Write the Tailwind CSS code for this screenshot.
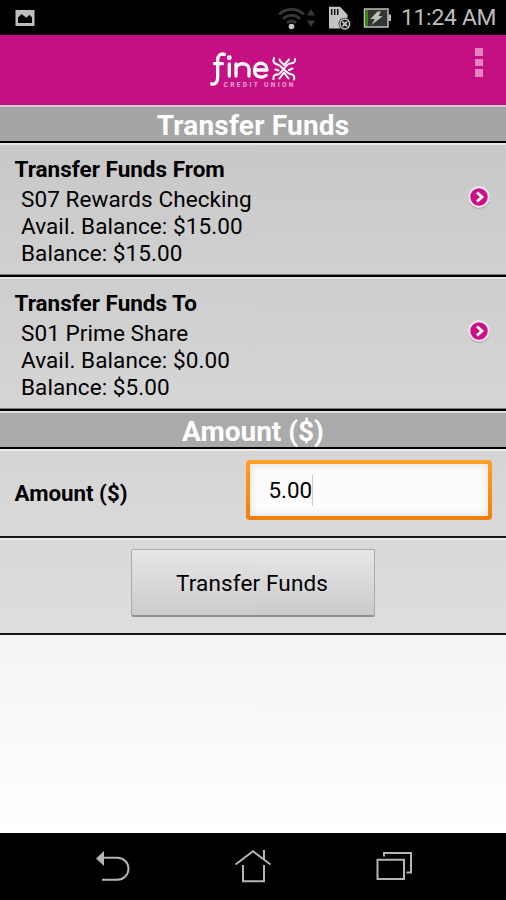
<!DOCTYPE html>
<html lang="en">
<head>
<meta charset="utf-8">
<title>Transfer Funds</title>
<script src="https://cdn.jsdelivr.net/npm/@tailwindcss/browser@4"></script>
</head>
<body class="w-[506px] h-[900px] overflow-hidden flex flex-col bg-black text-black font-[Roboto,sans-serif]">
<!-- Status bar -->
<div class="h-[35px] shrink-0 bg-black flex items-center pl-[15px] pr-[9px]">
  <svg class="w-5 h-4" viewBox="0 0 20 16"><path fill="#bebebe" fill-rule="evenodd" d="M.5 0h19v16H.5zM3 13h14V7.500L14.500 4.800 11.300 7.700 6.500 4 3 7.500z"/></svg>
  <svg class="ml-auto w-[38px] h-6" viewBox="0 0 38 24" fill="none" stroke="#383838" stroke-width="2.700">
    <path d="M2 8.500a18 18 0 0 1 25 0M6 13a12 12 0 0 1 17 0M10 17a6.500 6.500 0 0 1 9 0"/>
    <circle cx="14.500" cy="20.500" r="2.800" fill="#c4c4c4" stroke="none"/>
    <path fill="#383838" stroke="none" d="M30 9.500h8l-4-6.500zM30 14.500h8l-4 6.500z"/>
  </svg>
  <svg class="ml-[12px] w-6 h-6" viewBox="0 0 24 24">
    <path fill="#c4c4c4" d="M2 .8h11l7.500 8v13.700H2z"/><path stroke="#111" stroke-width="1.500" d="M4.700 3v6M7.700 3v6M10.700 3v6"/>
    <circle cx="17.800" cy="18" r="6.200" fill="#000"/><circle cx="17.800" cy="18" r="4.900" fill="#111" stroke="#c4c4c4" stroke-width="1.500"/><path stroke="#c4c4c4" stroke-width="1.900" d="M15.500 15.700l4.600 4.600M20.100 15.700l-4.600 4.600"/>
  </svg>
  <svg class="ml-[12px] w-7 h-5" viewBox="0 0 28 20">
    <rect x="1.500" y="1" width="23.500" height="18" fill="#343634" stroke="#bebebe" stroke-width="1.500"/><rect x="2.500" y="2" width="2.500" height="16" fill="#388d06"/><path fill="#bebebe" d="M25.500 6.500H28v6.500h-2.500zM14.500 3.500H18L15.500 8l4.200.300L8.500 17l3.300-6H7.300z"/>
  </svg>
  <div class="ml-[11px] w-[95px] text-[22.800px] leading-[35px] text-[#bebebe] tracking-[-.250px] whitespace-nowrap"><span class="-ml-px">11:24 AM</span></div>
</div>
<!-- App header -->
<header class="h-[70px] shrink-0 bg-[#c51083] flex justify-center relative">
  <svg class="mt-[13px] w-[90px] h-[44px]" viewBox="0 0 90 44" fill="none" stroke="#fff" stroke-width="3.300" stroke-linecap="round" stroke-linejoin="round">
    <path d="M16.500 6.300C12 5 9.700 8 9.700 12v17c0 5-2 7.500-6 7M6.500 15.700h8M21.300 16v12M28 28V16M28 21c0-7 13-7 13 0v7M47.500 22h11.500c0-9-12.500-9-12.500 0 0 8 8 8 11.500 5.500"/>
    <circle cx="21.300" cy="9.700" r=".8" fill="#fff"/>
    <path stroke-width="2" d="M66 10c-1.500 4 0 5.500 3.500 6.500 3 1 4 3 6.500 5s4 4.500 7 4.800c3 .400 4 2.200 3 5.200M87 11c.5 3.500-1.500 4.500-5 4.500-4 0-9 11-12.500 11-3 0-4.500 1.500-4 4.500M71.500 11.500c.5 2.500 3 3.500 4.500 5.500M81 11.500l-5 5.500M67.500 21.500l3 1M84.500 20.500l-3.500 1.500M71.500 30.500l4.500-6 4.500 6"/>
    <text x="15.500" y="39.300" fill="#f4a5d5" stroke="none" font-family="Roboto" font-size="6.600" font-weight="700" textLength="70">CREDIT UNION</text>
  </svg>
  <div class="absolute right-[23px] top-[13px] flex flex-col gap-[3px]"><i class="w-2 h-[7.500px] bg-[#e583bf]"></i><i class="w-2 h-[7.500px] bg-[#e583bf]"></i><i class="w-2 h-[7.500px] bg-[#e583bf]"></i></div>
</header>
<!-- Form -->
<main class="h-[728px] shrink-0 flex flex-col bg-linear-to-b from-[#f4f4f4] from-[72%] to-white">
  <h1 class="h-[38px] shrink-0 bg-[#a5a5a5] border-t-2 border-t-[#d4cbd0] border-b-2 border-b-black text-white font-bold text-[28px] leading-[38px] tracking-[.2px] text-center whitespace-nowrap">Transfer Funds</h1>
  <section class="h-[134px] shrink-0 bg-linear-to-b from-[#c8c8c8] to-[#d0d0d0] border-t-2 border-t-[#e5e5e5] border-b-2 border-b-black shadow-[inset_0_-1px_#777] pl-[14.500px] pr-[15.500px] flex justify-between">
    <div class="pt-[10px]"><h2 class="font-bold text-[22.500px] leading-[28px]">Transfer Funds From</h2>
      <p class="pl-[6.500px] mt-[3px] text-[22.500px] tracking-[.080px] leading-[26.800px] whitespace-nowrap">S07 Rewards Checking<br>Avail. Balance: $15.00<br>Balance: $15.00</p></div>
    <svg class="mt-[40px] size-6" viewBox="0 0 24 24"><circle cx="12" cy="13.500" r="10.500" fill="#aaa"/><circle cx="12" cy="12" r="9.700" fill="#cb1088" stroke="#f0eaee" stroke-width="1.900"/><path fill="none" stroke="#fff" stroke-width="2.800" d="M10 7.500l5 4.500-5 4.500"/></svg>
  </section>
  <section class="h-[134px] shrink-0 bg-linear-to-b from-[#cecece] to-[#d5d5d5] border-t-2 border-t-[#e5e5e5] border-b-2 border-b-black shadow-[inset_0_-1px_#777] pl-[14.500px] pr-[15.500px] flex justify-between">
    <div class="pt-[10px]"><h2 class="font-bold text-[22.500px] leading-[28px]">Transfer Funds To</h2>
      <p class="pl-[6.500px] mt-[3px] text-[22.500px] tracking-[.080px] leading-[26.800px] whitespace-nowrap">S01 Prime Share<br>Avail. Balance: $0.00<br>Balance: $5.00</p></div>
    <svg class="mt-[40px] size-6" viewBox="0 0 24 24"><circle cx="12" cy="13.500" r="10.500" fill="#aaa"/><circle cx="12" cy="12" r="9.700" fill="#cb1088" stroke="#f0eaee" stroke-width="1.900"/><path fill="none" stroke="#fff" stroke-width="2.800" d="M10 7.500l5 4.500-5 4.500"/></svg>
  </section>
  <h1 class="h-[38px] shrink-0 bg-[#aaa] border-t-2 border-t-[#ddd] border-b-2 border-b-black text-white font-bold text-[28px] leading-[38px] text-center whitespace-nowrap">Amount ($)</h1>
  <section class="h-[89px] shrink-0 bg-linear-to-b from-[#d5d5d5] to-[#dadada] border-t-2 border-t-[#eee] border-b-2 border-b-[#101810] pl-[14.500px] pr-[14px] flex items-start justify-between">
    <label class="mt-[28px] font-bold text-[22.300px] leading-[28px]">Amount ($)</label>
    <div class="mt-[9px] w-[246px] h-[60px] rounded-[4px] bg-linear-to-b from-[#ff9f23] to-[#f57d09] p-1">
      <div class="h-full bg-[#fcfcfc] shadow-[inset_0_0_8px_#ddd] flex items-center pl-[18.500px] text-[22.400px] leading-[52px]"><span>5.00</span><i class="h-[31px] w-px bg-[#ccc]"></i></div>
    </div>
  </section>
  <section class="h-[97px] shrink-0 bg-linear-to-b from-[#d9d9d9] to-[#dedede] border-t-2 border-t-[#eaeaea] border-b-2 border-b-[#101810] flex justify-center">
    <button class="mt-[9px] w-[244px] h-[68px] rounded-[2px] border border-[#aaa] border-b-2 border-b-[#909090] bg-linear-to-b from-[#e7e7e7] to-[#cbcbcb] text-[22.500px] tracking-[.15px] leading-[67px] text-center pr-[2px]">Transfer Funds</button>
  </section>
</main>
<!-- Navigation bar -->
<nav class="h-[67px] shrink-0 bg-black relative">
  <svg class="w-full h-full" viewBox="0 833 506 67" fill="none" stroke="#b5b5b5" stroke-width="2">
    <path d="M103 857.700h14.500a11 11 0 0 1 0 22H102"/><path fill="#b5b5b5" stroke="none" d="M96 858.500l8-7.500v15z"/>
    <path d="M235.500 864.500l17.500-13.300 17.500 13.300M264 850v10M243 865v16.300h21V865"/>
    <path d="M377.500 859.800h26.500v19.200h-26.500zM384 856.500V853h27v19.500h-4.500"/>
  </svg>
</nav>
</body>
</html>
